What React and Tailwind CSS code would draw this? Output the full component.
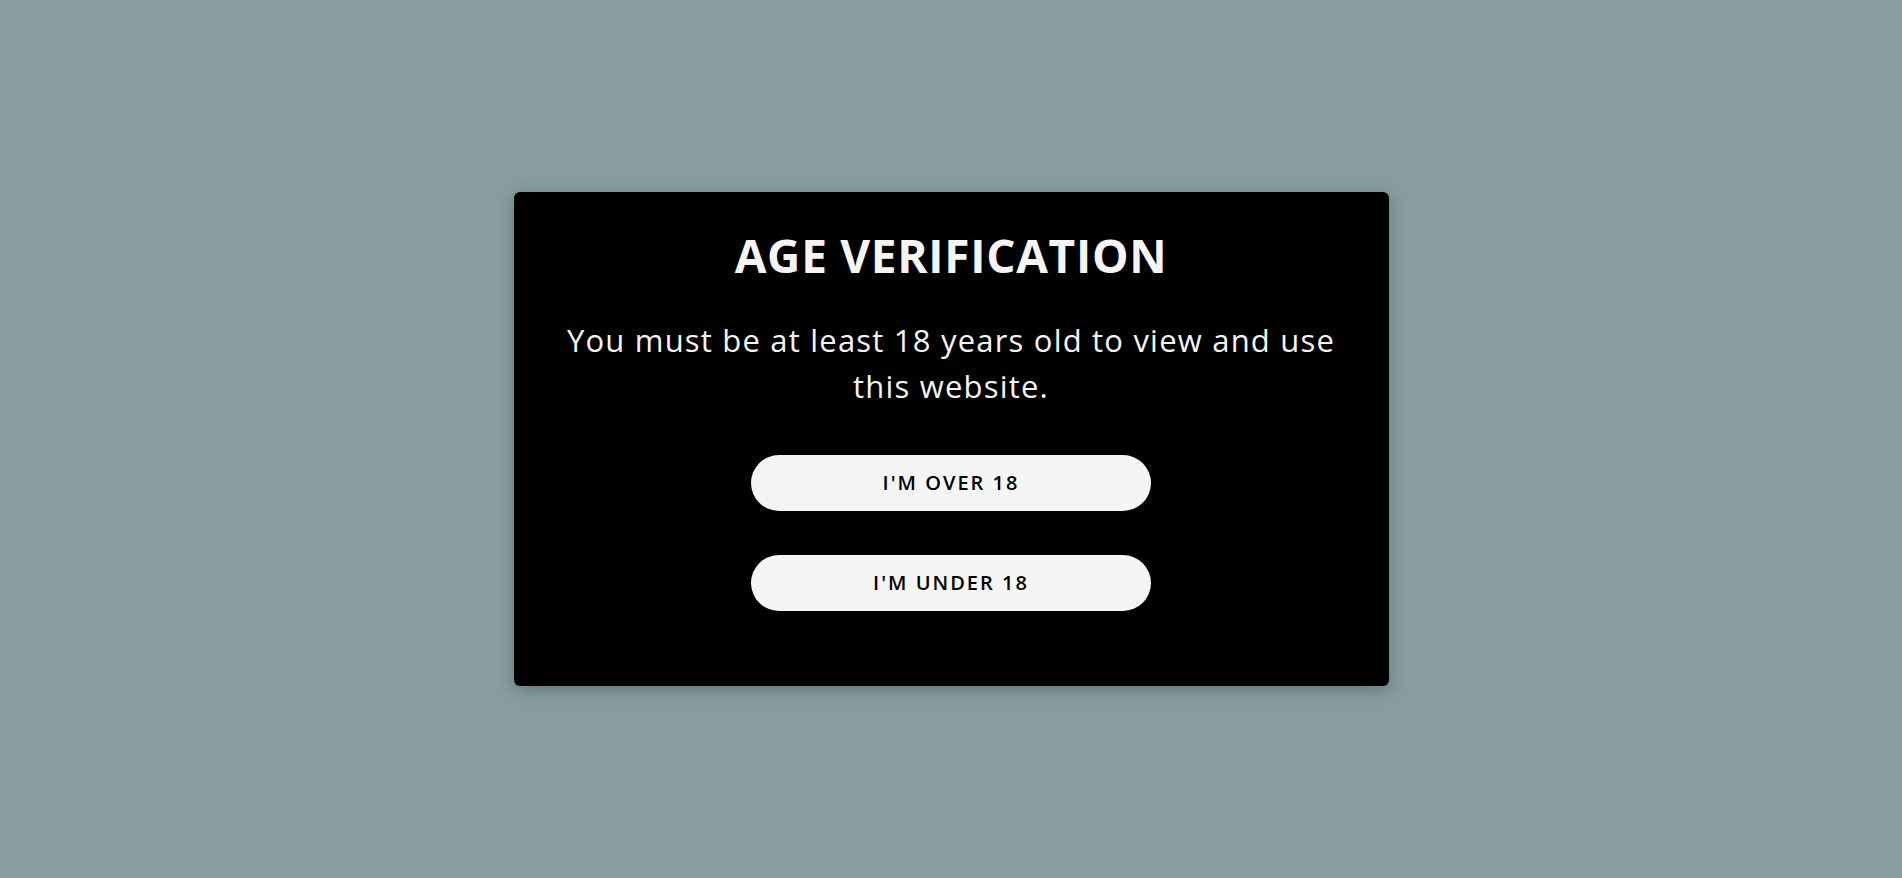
export default function App() {
  return (
    <div
      className="w-full h-[878px] bg-[#899c9e] flex items-center justify-center"
      style={{ fontFamily: '"Open Sans", "Noto Sans", sans-serif' }}
    >
      <div className="w-[875px] bg-black rounded-[6px] shadow-[0_4px_16px_rgba(0,0,0,0.25)] flex flex-col items-center pt-[35px] pb-[75px] text-center">
        <h1 className="text-[46px] leading-[56px] font-bold text-[#f5f5f5] tracking-[0.7px]">
          AGE VERIFICATION
        </h1>
        <p className="mt-[34px] text-[31px] leading-[46px] font-normal text-[#f5f5f5] tracking-[1.2px]">
          You must be at least 18 years old to view and use
          <br />
          this website.
        </p>
        <button className="mt-[46px] w-[400px] h-[56px] rounded-full bg-[#f5f5f5] text-black text-[20px] font-semibold tracking-[2px]">
          I'M OVER 18
        </button>
        <button className="mt-[44px] w-[400px] h-[56px] rounded-full bg-[#f5f5f5] text-black text-[20px] font-semibold tracking-[2px]">
          I'M UNDER 18
        </button>
      </div>
    </div>
  );
}
